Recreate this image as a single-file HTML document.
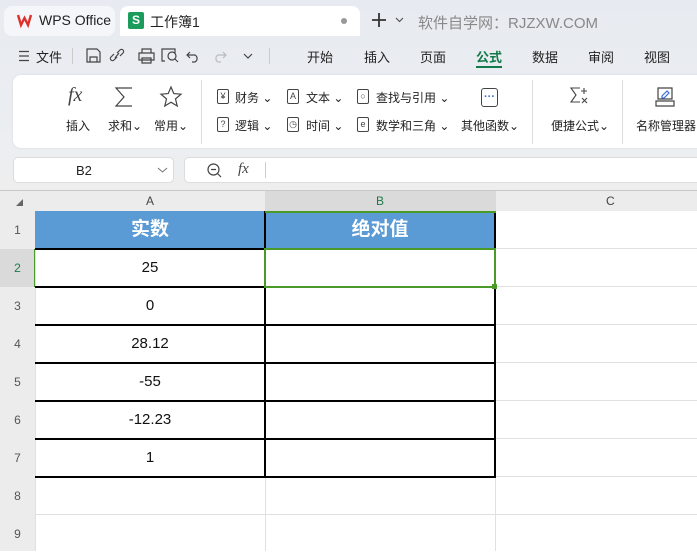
<!DOCTYPE html>
<html><head><meta charset="utf-8"><style>
*{margin:0;padding:0;box-sizing:border-box}
body{width:697px;height:551px;overflow:hidden;background:#fff;font-family:"Liberation Sans","Noto Sans CJK SC",sans-serif;color:#222;position:relative}
.a{position:absolute}
.top{left:0;top:0;width:697px;height:191px;background:linear-gradient(#e7ebf1,#eceef1 150px,#eeeeee)}
.t{font-size:13px;white-space:nowrap}
.ic{position:absolute;border:1.2px solid #444;border-radius:2px;font-size:9px;text-align:center;line-height:12px;color:#444}
svg{position:absolute;overflow:visible}
.hl{background:#ececec}
.rn{position:absolute;left:0;width:35px;text-align:center;font-size:12px;color:#555;line-height:38px}
.cell{position:absolute;text-align:center;font-size:15px;line-height:38px;color:#111}
</style></head><body>
<div class="a top"></div>
<div class="a" style="left:4px;top:6px;width:111px;height:30px;background:#f4f6f9;border-radius:8px"></div>
<svg style="left:17px;top:14px" width="15" height="12" viewBox="0 0 15 12"><path d="M1 1 L4 11 L7.5 4 L11 11 L14 1" stroke="#e0302a" stroke-width="2.4" fill="none"/></svg>
<div class="a t" style="left:39px;top:12px;font-size:14px;color:#222">WPS Office</div>
<div class="a" style="left:120px;top:6px;width:240px;height:30px;background:#fff;border-radius:8px 8px 0 0"></div>
<div class="a" style="left:128px;top:12px;width:16px;height:17px;background:#1c9c5a;border-radius:2px;color:#fff;font-size:12px;font-weight:bold;text-align:center;line-height:16px">S</div>
<div class="a t" style="left:150px;top:12px;font-size:14px">工作簿1</div>
<div class="a" style="left:341px;top:18px;width:6px;height:6px;border-radius:50%;background:#999"></div>
<svg style="left:372px;top:13px" width="14" height="14"><path d="M7 0V14M0 7H14" stroke="#333" stroke-width="1.8"/></svg>
<svg style="left:396px;top:18px" width="7" height="4"><path d="M0 0L3.5 3.5L7 0" stroke="#555" fill="none" stroke-width="1.2"/></svg>
<div class="a t" style="left:418px;top:12px;font-size:15px;color:#888">软件自学网：RJZXW.COM</div>
<!-- menu row -->
<svg style="left:19px;top:51px" width="10" height="10"><path d="M0 .5H10M0 5H10M0 9.5H10" stroke="#444" stroke-width="1.2"/></svg>
<div class="a t" style="left:36px;top:47px;font-size:13px">文件</div>
<div class="a" style="left:72px;top:48px;width:1px;height:16px;background:#ccc"></div>
<svg style="left:86px;top:48px" width="170" height="16" fill="none" stroke="#444" stroke-width="1.2">
<path d="M1 1H11L14 4V14H1Z M4 14V9H11V14"/>
<path d="M31 9L28 12A2 2 0 0 1 25 9L28 6 M31 5L34 2A2 2 0 0 1 37 5L34 8 M29 10L33 5"/>
<path d="M56 5V1H65V5 M53 5H68V12H53Z M56 10H65V15H56Z"/>
<path d="M79 13H76V1H89V5 M82 8A4 4 0 1 0 90 8A4 4 0 1 0 82 8 M89 11L92 14"/>
<path d="M104 4L101 7L104 10 M101 7H109A4 4 0 0 1 109 14H106"/>
<path d="M137 4L140 7L137 10 M140 7H132A4 4 0 0 0 132 14H135" stroke="#bbb"/>
<path d="M158 6L162 10L166 6"/>
</svg>
<div class="a" style="left:269px;top:48px;width:1px;height:16px;background:#ccc"></div>
<div class="a t" style="left:307px;top:47px">开始</div>
<div class="a t" style="left:364px;top:47px">插入</div>
<div class="a t" style="left:420px;top:47px">页面</div>
<div class="a t" style="left:476px;top:47px;color:#137a4a;font-weight:bold">公式</div>
<div class="a" style="left:476px;top:66px;width:26px;height:2px;background:#137a4a"></div>
<div class="a t" style="left:532px;top:47px">数据</div>
<div class="a t" style="left:588px;top:47px">审阅</div>
<div class="a t" style="left:644px;top:47px">视图</div>
<!-- ribbon -->
<div class="a" style="left:13px;top:75px;width:700px;height:73px;background:#fff;border-radius:8px;box-shadow:0 0 2px #d6d9de"></div>
<div class="a t" style="left:68px;top:84px;font-size:20px;font-family:'Liberation Serif',serif;font-style:italic;color:#444">fx</div>
<div class="a t" style="left:66px;top:117px;font-size:12px">插入</div>
<svg style="left:115px;top:87px" width="18" height="20"><path d="M17 1H1L9 10L1 19H17" fill="none" stroke="#444" stroke-width="1.2"/></svg>
<div class="a t" style="left:108px;top:117px;font-size:12px">求和⌄</div>
<svg style="left:160px;top:86px" width="22" height="21" viewBox="0 0 22 21"><path d="M11 1 L13.8 7.6 L21 8.2 L15.5 12.9 L17.2 20 L11 16.2 L4.8 20 L6.5 12.9 L1 8.2 L8.2 7.6 Z" fill="none" stroke="#444" stroke-width="1.2"/></svg>
<div class="a t" style="left:154px;top:117px;font-size:12px">常用⌄</div>
<div class="a" style="left:201px;top:80px;width:1px;height:64px;background:#ddd"></div>
<div class="ic" style="left:217px;top:89px;width:12px;height:15px">¥</div>
<div class="a t" style="left:235px;top:89px;font-size:12px">财务 ⌄</div>
<div class="ic" style="left:287px;top:89px;width:12px;height:15px">A</div>
<div class="a t" style="left:306px;top:89px;font-size:12px">文本 ⌄</div>
<div class="ic" style="left:357px;top:89px;width:12px;height:15px">○</div>
<div class="a t" style="left:376px;top:89px;font-size:12px">查找与引用 ⌄</div>
<div class="ic" style="left:217px;top:117px;width:12px;height:15px">?</div>
<div class="a t" style="left:235px;top:117px;font-size:12px">逻辑 ⌄</div>
<div class="ic" style="left:287px;top:117px;width:12px;height:15px">◷</div>
<div class="a t" style="left:306px;top:117px;font-size:12px">时间 ⌄</div>
<div class="ic" style="left:357px;top:117px;width:12px;height:15px">e</div>
<div class="a t" style="left:376px;top:117px;font-size:12px">数学和三角 ⌄</div>
<div class="ic" style="left:481px;top:88px;width:17px;height:19px;border-radius:3px"></div>
<div class="a t" style="left:484px;top:91px;font-size:11px;color:#3a6fd8;font-weight:bold">···</div>
<div class="a t" style="left:461px;top:117px;font-size:12px">其他函数⌄</div>
<div class="a" style="left:532px;top:80px;width:1px;height:64px;background:#ddd"></div>
<svg style="left:570px;top:87px" width="20" height="20" fill="none" stroke="#444" stroke-width="1.1"><path d="M10 1H1L6 8L1 15H10 M14 1V7M11 4H17 M12 11L17 16M17 11L12 16"/></svg>
<div class="a t" style="left:551px;top:117px;font-size:12px">便捷公式⌄</div>
<div class="a" style="left:622px;top:80px;width:1px;height:64px;background:#ddd"></div>
<svg style="left:656px;top:87px" width="18" height="20" fill="none" stroke="#444" stroke-width="1.2"><path d="M2 1H16V12H2Z M0 14H18V19H0Z"/><path d="M6 9L11 4L13 6L8 11H6Z" stroke="#3a6fd8"/></svg>
<div class="a t" style="left:636px;top:117px;font-size:12px">名称管理器</div>
<!-- formula bar -->
<div class="a" style="left:13px;top:157px;width:161px;height:26px;background:#fff;border:1px solid #dcdcdc;border-radius:5px"></div>
<div class="a t" style="left:76px;top:163px;font-size:13px">B2</div>
<svg style="left:158px;top:168px" width="9" height="5"><path d="M0 0L4.5 4L9 0" stroke="#777" fill="none"/></svg>
<div class="a" style="left:184px;top:157px;width:520px;height:26px;background:#fff;border:1px solid #dcdcdc;border-radius:5px"></div>
<svg style="left:207px;top:163px" width="16" height="16" fill="none" stroke="#444" stroke-width="1.2"><circle cx="6.5" cy="6.5" r="5.5"/><path d="M4 6.5H9 M10.5 10.5L14 14"/></svg>
<div class="a t" style="left:238px;top:161px;font-size:15px;font-family:'Liberation Serif',serif;font-style:italic;color:#444">fx</div>
<div class="a" style="left:265px;top:162px;width:1px;height:16px;background:#ccc"></div>
<!-- grid headers -->
<div class="a" style="left:0;top:190px;width:697px;height:1px;background:#c8c8c8"></div>
<div class="a hl" style="left:0;top:191px;width:697px;height:20px"></div>
<div class="a" style="left:265px;top:191px;width:231px;height:20px;background:#dadada"></div>
<div class="a t" style="left:146px;top:194px;font-size:12px;color:#444">A</div>
<div class="a t" style="left:376px;top:194px;font-size:12px;color:#1d7a4a">B</div>
<div class="a t" style="left:606px;top:194px;font-size:12px;color:#444">C</div>
<svg style="left:16px;top:199px" width="7" height="7"><path d="M7 0V7H0Z" fill="#666"/></svg>
<div class="a hl" style="left:0;top:211px;width:35px;height:340px"></div>
<div class="a" style="left:0;top:249px;width:35px;height:38px;background:#dadada"></div>
<div class="a" style="left:34px;top:249px;width:2px;height:38px;background:#4a9a2a"></div>
<div class="a" style="left:35px;top:211px;width:662px;height:340px;background:repeating-linear-gradient(to bottom,transparent 0 37px,#e0e0e0 37px 38px)"></div>
<div class="a" style="left:265px;top:211px;width:1px;height:340px;background:#e0e0e0"></div>
<div class="a" style="left:495px;top:211px;width:1px;height:340px;background:#e0e0e0"></div>
<div class="a" style="left:35px;top:211px;width:1px;height:340px;background:#e0e0e0"></div>
<div class="a" style="left:35px;top:211px;width:461px;height:38px;background:#5b9bd5"></div>
<div class="cell" style="left:35px;top:211px;width:230px;color:#fff;font-weight:bold;font-size:19px">实数</div>
<div class="cell" style="left:265px;top:211px;width:230px;color:#fff;font-weight:bold;font-size:19px">绝对值</div>
<div class="a" style="left:35px;top:248px;width:461px;height:2px;background:#000"></div>
<div class="a" style="left:35px;top:286px;width:461px;height:2px;background:#000"></div>
<div class="a" style="left:35px;top:324px;width:461px;height:2px;background:#000"></div>
<div class="a" style="left:35px;top:362px;width:461px;height:2px;background:#000"></div>
<div class="a" style="left:35px;top:400px;width:461px;height:2px;background:#000"></div>
<div class="a" style="left:35px;top:438px;width:461px;height:2px;background:#000"></div>
<div class="a" style="left:35px;top:476px;width:461px;height:2px;background:#000"></div>
<div class="a" style="left:264px;top:211px;width:2px;height:267px;background:#000"></div>
<div class="a" style="left:494px;top:211px;width:2px;height:267px;background:#000"></div>
<div class="a" style="left:265px;top:211px;width:231px;height:2px;background:#4a9a2a"></div>
<div class="a" style="left:264px;top:248px;width:232px;height:40px;border:2px solid #4a9a2a"></div>
<div class="a" style="left:492px;top:284px;width:5px;height:5px;background:#4a9a2a"></div>
<div class="rn" style="top:211px">1</div>
<div class="rn" style="top:249px;color:#1d7a4a">2</div>
<div class="rn" style="top:287px">3</div>
<div class="rn" style="top:325px">4</div>
<div class="rn" style="top:363px">5</div>
<div class="rn" style="top:401px">6</div>
<div class="rn" style="top:439px">7</div>
<div class="rn" style="top:477px">8</div>
<div class="rn" style="top:515px">9</div>
<div class="cell" style="left:35px;top:249px;width:230px">25</div>
<div class="cell" style="left:35px;top:287px;width:230px">0</div>
<div class="cell" style="left:35px;top:325px;width:230px">28.12</div>
<div class="cell" style="left:35px;top:363px;width:230px">-55</div>
<div class="cell" style="left:35px;top:401px;width:230px">-12.23</div>
<div class="cell" style="left:35px;top:439px;width:230px">1</div>
</body></html>
